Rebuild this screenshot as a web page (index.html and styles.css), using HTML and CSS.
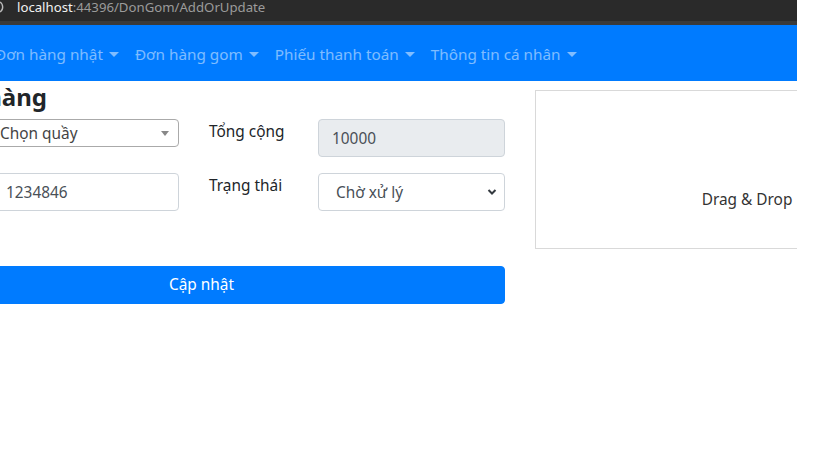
FILE: index.html
```html
<!DOCTYPE html>
<html lang="vi">
<head>
<meta charset="utf-8">
<title>AddOrUpdate</title>
<link rel="stylesheet" href="styles.css">
</head>
<body>
<div class="window">
  <div class="addressbar">
    <svg class="info" width="6" height="14" viewBox="0 0 6 14"><path d="M-3 2 A6 6 0 0 1 -3 12" fill="none" stroke="#bbb" stroke-width="1.4" transform="translate(3 0)"/></svg>
    <span class="host">localhost</span><span class="path">:44396/DonGom/AddOrUpdate</span>
  </div>
  <nav class="navbar">
    <a class="nav-link">Đơn hàng nhật<span class="caret"></span></a>
    <a class="nav-link">Đơn hàng gom<span class="caret"></span></a>
    <a class="nav-link">Phiếu thanh toán<span class="caret"></span></a>
    <a class="nav-link">Thông tin cá nhân<span class="caret"></span></a>
  </nav>
  <main class="content">
    <section class="form">
      <div class="title-wrap"><h2 class="title">Đơn hàng</h2></div>
      <div class="form-grid">
        <label class="lbl">Quầy</label>
        <div class="select2"><span class="s2-text">Chọn quầy</span><span class="s2-arrow"></span></div>
        <label class="lbl">Tổng cộng</label>
        <div class="input readonly">10000</div>

        <label class="lbl">Mã đơn</label>
        <div class="input first">1234846</div>
        <label class="lbl">Trạng thái</label>
        <div class="input select"><span>Chờ xử lý</span>
          <svg class="chev" width="10" height="8" viewBox="0 0 10 8"><path d="M1.5 2 L5 5.5 L8.5 2" fill="none" stroke="#343a40" stroke-width="2"/></svg>
        </div>
      </div>
      <button class="btn">Cập nhật</button>
    </section>
    <section class="dropzone">
      <div class="dz-text">Drag &amp; Drop</div>
    </section>
  </main>
</div>
</body>
</html>
```

FILE: styles.css
```css
* { box-sizing: border-box; }
html, body { margin: 0; padding: 0; background: #fff; }
body {
  font-family: "Noto Sans", "Open Sans", sans-serif;
  font-size: 15.4px;
  color: #212529;
  width: 819px;
  height: 463px;
  overflow: hidden;
}
.window {
  width: 797px;
  overflow: hidden;
}
.addressbar {
  height: 25px;
  background: #2a2a2a;
  border-bottom: 4px solid #3a3a3a;
  display: flex;
  align-items: flex-start;
  font-size: 13.2px;
  line-height: 15px;
  white-space: nowrap;
}
.info { margin-right: 11px; flex: none; }
.host { color: #f2f2f2; }
.path { color: #9b9b9b; }
.navbar {
  height: 56px;
  background: #007bff;
  display: flex;
  align-items: center;
  margin-left: -13px;
  padding-top: 2px;
  white-space: nowrap;
  font-size: 15.3px;
}
.nav-link {
  color: rgba(255, 255, 255, 0.5);
  padding: 8px;
  line-height: 24px;
  display: flex;
  align-items: center;
}
.caret {
  display: inline-block;
  margin-left: 6px;
  border-top: 5px solid rgba(255, 255, 255, 0.5);
  border-left: 5px solid transparent;
  border-right: 5px solid transparent;
}
.content {
  display: flex;
  align-items: flex-start;
  margin-left: -102px;
}
.form {
  width: 607px;
  flex: none;
}
.title-wrap {
  width: 149px;
  display: flex;
  justify-content: flex-end;
}
.title {
  margin: 2px 0 8px;
  font-size: 24px;
  font-weight: 700;
  line-height: 28px;
  white-space: nowrap;
}
.form-grid {
  display: grid;
  grid-template-columns: 66px 185px 79px 187px;
  column-gap: 30px;
  row-gap: 16px;
  align-items: start;
}
.lbl {
  line-height: 24px;
  padding-top: 1px;
  white-space: nowrap;
}
.select2 {
  height: 28px;
  border: 1px solid #aaa;
  border-radius: 4px;
  display: flex;
  align-items: center;
  padding-left: 5px;
  position: relative;
  color: #444;
}
.s2-arrow {
  position: absolute;
  right: 9px;
  top: 11px;
  border-top: 5px solid #888;
  border-left: 4px solid transparent;
  border-right: 4px solid transparent;
}
.input {
  height: 38px;
  border: 1px solid #ced4da;
  border-radius: 4px;
  padding: 0 12px 0 13px;
  display: flex;
  align-items: center;
  color: #495057;
}
.first { padding-left: 11px; }
.readonly { background: #e9ecef; }
.select {
  justify-content: space-between;
  padding-left: 17px;
  padding-right: 7px;
}
.btn {
  display: block;
  width: 100%;
  height: 38px;
  margin-top: 55px;
  background: #007bff;
  color: #fff;
  border: 1px solid #007bff;
  border-radius: 4px;
  font: inherit;
  line-height: 24px;
  padding: 0;
  text-align: center;
}
.dropzone {
  flex: none;
  margin-left: 30px;
  margin-top: 9px;
  width: 424px;
  height: 159px;
  border: 1px solid #d9d9d9;
  padding-top: 97px;
  color: #333;
}
.dz-text {
  text-align: center;
  line-height: 24px;
  white-space: nowrap;
}
```
